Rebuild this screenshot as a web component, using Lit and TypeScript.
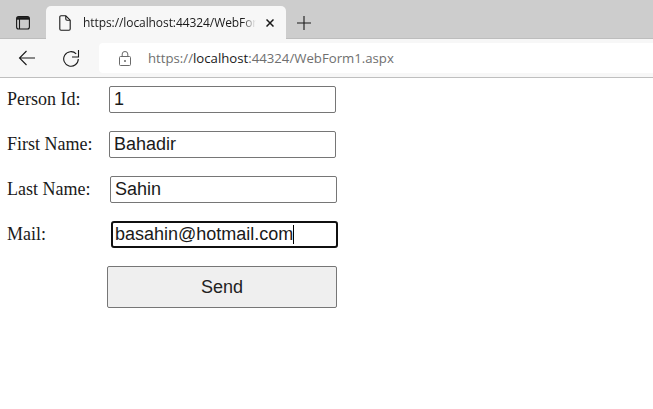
import { LitElement, html, css } from 'lit';
import { customElement } from 'lit/decorators.js';

const FIELDS = [
  { label: 'Person Id:', value: '1', indent: 102 },
  { label: 'First Name:', value: 'Bahadir', indent: 102 },
  { label: 'Last Name:', value: 'Sahin', indent: 103 },
  { label: 'Mail:', value: 'basahin@hotmail.com', indent: 104, focused: true },
];

@customElement('app-root')
export class AppRoot extends LitElement {
  static styles = css`
    :host {
      display: block;
      width: 653px;
      height: 409px;
      background: #fff;
      overflow: hidden;
    }

    .tabstrip {
      height: 39px;
      background: #cdcdcd;
      display: flex;
      align-items: flex-end;
      box-sizing: border-box;
      border-bottom: 1px solid #bdbdbd;
    }
    .tab-actions {
      width: 46px;
      height: 38px;
      display: flex;
      align-items: flex-start;
      justify-content: center;
      padding-top: 16px;
      box-sizing: border-box;
    }
    .tab {
      width: 240px;
      height: 33px;
      margin-bottom: -1px;
      background: #f7f7f7;
      border-radius: 5px 5px 0 0;
      display: flex;
      align-items: center;
      box-sizing: border-box;
      padding-left: 13px;
      position: relative;
      z-index: 1;
    }
    .tab-title {
      width: 173px;
      margin-left: 12px;
      font: 12px 'Open Sans', sans-serif;
      letter-spacing: -0.08px;
      color: #1a1a1a;
      white-space: nowrap;
      overflow: hidden;
      -webkit-mask-image: linear-gradient(to right, #000 92%, transparent);
      mask-image: linear-gradient(to right, #000 92%, transparent);
    }
    .tab-close {
      margin-left: 10px;
      display: flex;
    }
    .new-tab {
      display: flex;
      margin-left: 11px;
      margin-bottom: 8px;
    }

    .toolbar {
      height: 39px;
      box-sizing: border-box;
      background: #f7f7f7;
      border-bottom: 1px solid #bfbfbf;
      display: flex;
      align-items: flex-start;
      padding-top: 4px;
    }
    .nav {
      display: flex;
      align-items: center;
      width: 99px;
      height: 30px;
      box-sizing: border-box;
      padding-left: 18px;
      gap: 26px;
    }
    .address {
      flex: 1;
      height: 30px;
      background: #fff;
      border-radius: 4px 0 0 4px;
      display: flex;
      align-items: center;
      padding-left: 20px;
      gap: 17px;
      font: 13.2px 'Open Sans', sans-serif;
      color: #6f6f6f;
    }
    .address b {
      font-weight: 400;
      color: #1a1a1a;
    }

    .form {
      display: flex;
      flex-direction: column;
      gap: 18px;
      padding: 8px 0 0 7px;
    }
    .row {
      display: flex;
      align-items: center;
      height: 27px;
      font: 18px 'Liberation Serif', serif;
      color: #1a1a1a;
    }
    .field {
      position: relative;
      display: flex;
    }
    input {
      width: 227px;
      height: 27px;
      box-sizing: border-box;
      border: 1px solid #767676;
      border-radius: 2px;
      padding: 0 3px 0 4px;
      margin: 0;
      background: #fff;
      font: 18px 'Liberation Sans', sans-serif;
      color: #1a1a1a;
      outline: none;
    }
    input.focused {
      border: 2px solid #101010;
      border-radius: 3px;
      padding: 0 2px;
    }
    .caret {
      position: absolute;
      left: 182px;
      top: 4px;
      width: 1px;
      height: 19px;
      background: #000;
    }
    .actions {
      padding-left: 100px;
      display: flex;
    }
    button {
      width: 230px;
      height: 42px;
      box-sizing: border-box;
      border: 1px solid #767676;
      border-radius: 2px;
      background: #efefef;
      font: 18px 'Liberation Sans', sans-serif;
      color: #222;
      padding: 0;
    }
  `;

  render() {
    return html`
      <div class="tabstrip">
        <div class="tab-actions">
          <svg width="14" height="14" viewBox="0 0 14 14" fill="none" stroke="#1a1a1a" stroke-width="1.1">
            <rect x=".6" y=".6" width="12.8" height="12.4" rx="2" />
            <path d="M1 2.4h12" stroke-width="2.6" />
            <path d="M3.5 3v10" />
          </svg>
        </div>
        <div class="tab">
          <svg width="12" height="16" viewBox="0 0 12 16" fill="none" stroke="#1a1a1a" stroke-width="1.1">
            <path d="M2 .8h4.8l4.4 4.4V14a1.2 1.2 0 0 1-1.2 1.2H2A1.2 1.2 0 0 1 .8 14V2A1.2 1.2 0 0 1 2 .8z" />
            <path d="M6.8 1v3a1.2 1.2 0 0 0 1.2 1.2h3" />
          </svg>
          <span class="tab-title">https://localhost:44324/WebForm1.aspx</span>
          <span class="tab-close">
            <svg width="8" height="8" viewBox="0 0 8 8" stroke="#1a1a1a" stroke-width="1.5">
              <path d="M.5.5l7 7M7.5.5l-7 7" />
            </svg>
          </span>
        </div>
        <span class="new-tab">
          <svg width="14" height="14" viewBox="0 0 14 14" stroke="#1a1a1a" stroke-width="1.1">
            <path d="M7 0v14M0 7h14" />
          </svg>
        </span>
      </div>
      <div class="toolbar">
        <div class="nav">
          <svg width="18" height="16" viewBox="0 0 18 16" fill="none" stroke="#1a1a1a" stroke-width="1.1">
            <path d="M17 8H1.5M8.5 1L1.5 8l7 7" />
          </svg>
          <svg width="18" height="18" viewBox="0 0 18 18" fill="none" stroke="#1a1a1a" stroke-width="1.1">
            <path d="M16.5 1v7H10" />
            <path d="M14.2 4.8A7.3 7.3 0 1 0 16.3 10" />
          </svg>
        </div>
        <div class="address">
          <svg width="12" height="15" viewBox="0 0 12 15" fill="none" stroke="#6a6a6a" stroke-width="1">
            <rect x=".5" y="5.5" width="11" height="9" rx="1" />
            <path d="M3.2 5.5V3a2.8 2.5 0 0 1 5.6 0v2.5" />
            <circle cx="6" cy="10" r=".6" fill="#6a6a6a" />
          </svg>
          <span>https://<b>localhost</b>:44324/WebForm1.aspx</span>
        </div>
      </div>
      <div class="form">
        ${FIELDS.map(
          (f) => html`
            <div class="row">
              <label style="width:${f.indent}px">${f.label}</label>
              <div class="field">
                <input class=${f.focused ? 'focused' : ''} .value=${f.value} />
                ${f.focused ? html`<span class="caret"></span>` : ''}
              </div>
            </div>
          `,
        )}
        <div class="actions"><button>Send</button></div>
      </div>
    `;
  }
}
